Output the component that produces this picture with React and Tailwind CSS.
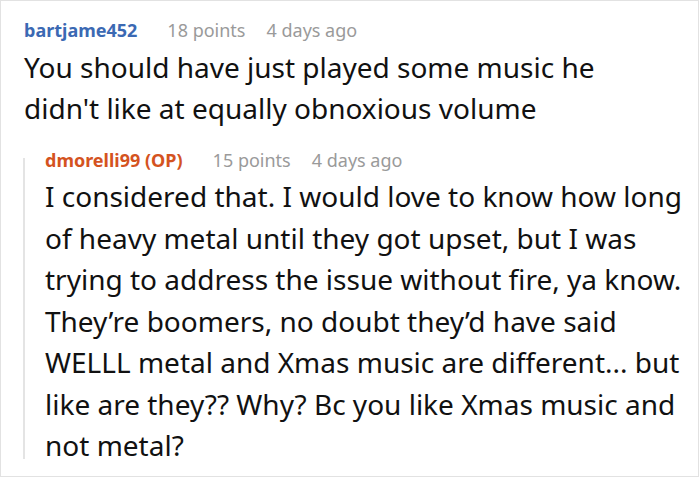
export default function App() {
  return (
    <div className="w-[700px] h-[478px] bg-white" style={{ fontFamily: '"Noto Sans", "Open Sans", sans-serif' }}>
      <div className="w-[699px] h-[477px] border border-[#e2e2e2] pt-[16px] pl-[23px] overflow-hidden">
        <div className="flex items-baseline text-[18px] leading-[26px]">
          <span className="font-bold text-[#3b69b3]">bartjame452</span>
          <span className="ml-[30px] text-[#9a9a9a]">18 points</span>
          <span className="ml-[21px] text-[#9a9a9a]">4 days ago</span>
        </div>
        <div className="mt-[4px] text-[28px] leading-[41px] text-[#111]">
          You should have just played some music he<br />didn't like at equally obnoxious volume
        </div>
        <div className="mt-[18px] flex">
          <div className="w-[2px] bg-[#e4e4e4] mt-[11px] mb-[8px] -ml-[1px]"></div>
          <div className="pl-[20px]">
            <div className="flex items-baseline text-[18px] leading-[26px]">
              <span className="font-bold text-[#d4531f]">dmorelli99 (OP)</span>
              <span className="ml-[30px] text-[#9a9a9a]">15 points</span>
              <span className="ml-[21px] text-[#9a9a9a]">4 days ago</span>
            </div>
            <div className="mt-[3px] text-[28px] leading-[41.5px] text-[#111]">
              I considered that. I would love to know how long<br />
              of heavy metal until they got upset, but I was<br />
              trying to address the issue without fire, ya know.<br />
              They’re boomers, no doubt they’d have said<br />
              WELLL metal and Xmas music are different... but<br />
              like are they?? Why? Bc you like Xmas music and<br />
              not metal?
            </div>
          </div>
        </div>
      </div>
    </div>
  );
}
